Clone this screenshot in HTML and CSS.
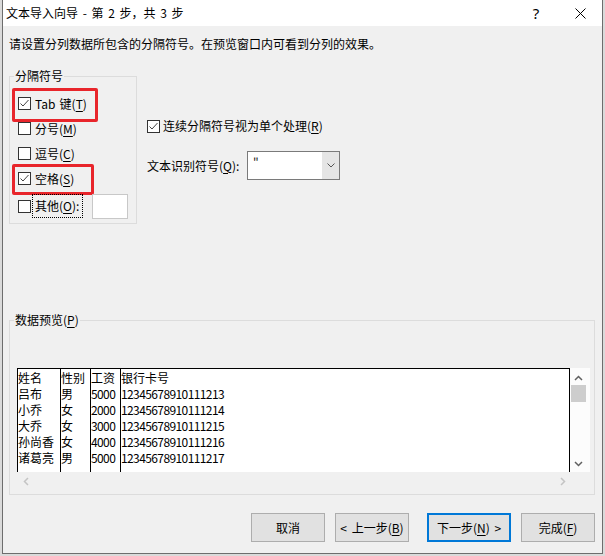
FILE: index.html
```html
<!DOCTYPE html>
<html lang="zh-CN">
<head>
    <meta charset="UTF-8">
    <title>文本导入向导 - 第 2 步，共 3 步</title>
    <link rel="stylesheet" href="styles.css">
</head>
<body>
<div class="dialog">
    <div class="titlebar">
        <span class="title">文本导入向导 - 第 2 步，共 3 步</span>
        <span class="help">?</span>
        <span class="close">
            <svg width="11" height="11" viewBox="0 0 11 11"><path d="M0.5 0.5 L10.5 10.5 M10.5 0.5 L0.5 10.5" stroke="#000" stroke-width="1" fill="none"/></svg>
        </span>
    </div>

    <div class="content">
        <p class="intro">请设置分列数据所包含的分隔符号。在预览窗口内可看到分列的效果。</p>

        <div class="options">
            <fieldset class="group delims">
                <legend>分隔符号</legend>
                <div class="checks">
                    <div class="row mark-tab">
                        <span class="box checked"><svg width="11" height="11" viewBox="0 0 11 11"><polyline points="1.5,5.5 4,8 9.5,2" fill="none" stroke="#444" stroke-width="1"/></svg></span>
                        <label>Tab 键(<u>T</u>)</label>
                    </div>
                    <div class="row">
                        <span class="box"></span>
                        <label>分号(<u>M</u>)</label>
                    </div>
                    <div class="row">
                        <span class="box"></span>
                        <label>逗号(<u>C</u>)</label>
                    </div>
                    <div class="row mark-space">
                        <span class="box checked"><svg width="11" height="11" viewBox="0 0 11 11"><polyline points="1.5,5.5 4,8 9.5,2" fill="none" stroke="#444" stroke-width="1"/></svg></span>
                        <label>空格(<u>S</u>)</label>
                    </div>
                    <div class="row other">
                        <span class="box"></span>
                        <label class="focused">其他(<u>O</u>):</label>
                        <span class="field"></span>
                    </div>
                </div>
            </fieldset>

            <div class="side">
                <div class="row single">
                    <span class="box checked"><svg width="11" height="11" viewBox="0 0 11 11"><polyline points="1.5,5.5 4,8 9.5,2" fill="none" stroke="#444" stroke-width="1"/></svg></span>
                    <label>连续分隔符号视为单个处理(<u>R</u>)</label>
                </div>
                <div class="qualifier">
                    <label>文本识别符号(<u>Q</u>):</label>
                    <div class="combo">
                        <span class="value">"</span>
                        <span class="drop"><svg width="8" height="5" viewBox="0 0 8 5"><polyline points="0.5,0.5 4,4 7.5,0.5" fill="none" stroke="#555" stroke-width="1"/></svg></span>
                    </div>
                </div>
            </div>
        </div>

        <fieldset class="group preview">
            <legend>数据预览(<u>P</u>)</legend>
            <div class="preview-body">
                <div class="sheet">
                    <div class="col c1">
                        <span>姓名</span><span>吕布</span><span>小乔</span><span>大乔</span><span>孙尚香</span><span>诸葛亮</span>
                    </div>
                    <div class="col c2">
                        <span>性别</span><span>男</span><span>女</span><span>女</span><span>女</span><span>男</span>
                    </div>
                    <div class="col c3">
                        <span>工资</span><span class="num">5000</span><span class="num">2000</span><span class="num">3000</span><span class="num">4000</span><span class="num">5000</span>
                    </div>
                    <div class="col c4">
                        <span>银行卡号</span>
                        <span class="num">12345678910111213</span>
                        <span class="num">12345678910111214</span>
                        <span class="num">12345678910111215</span>
                        <span class="num">12345678910111216</span>
                        <span class="num">12345678910111217</span>
                    </div>
                </div>
                <div class="vscroll">
                    <svg class="up" width="9" height="6" viewBox="0 0 9 6"><polyline points="1,5 4.5,1.5 8,5" fill="none" stroke="#606060" stroke-width="1.5"/></svg>
                    <span class="thumb"></span>
                    <svg class="down" width="9" height="6" viewBox="0 0 9 6"><polyline points="1,1 4.5,4.5 8,1" fill="none" stroke="#606060" stroke-width="1.5"/></svg>
                </div>
                <div class="hscroll">
                    <svg width="6" height="9" viewBox="0 0 6 9"><polyline points="5,1 1.5,4.5 5,8" fill="none" stroke="#c4c4c4" stroke-width="1.5"/></svg>
                    <svg width="6" height="9" viewBox="0 0 6 9"><polyline points="1,1 4.5,4.5 1,8" fill="none" stroke="#c4c4c4" stroke-width="1.5"/></svg>
                </div>
            </div>
        </fieldset>

        <div class="buttons">
            <button class="btn">取消</button>
            <button class="btn">&lt; 上一步(<u>B</u>)</button>
            <button class="btn primary">下一步(<u>N</u>) &gt;</button>
            <button class="btn">完成(<u>F</u>)</button>
        </div>
    </div>
</div>
</body>
</html>
```

FILE: styles.css
```css
* {
    margin: 0;
    padding: 0;
    box-sizing: border-box;
}
body {
    background: #dadada;
    font-family: "Noto Sans CJK SC", "Microsoft YaHei", sans-serif;
    font-size: 12px;
    word-spacing: 1.5px;
    color: #000;
    overflow: hidden;
}
u {
    text-decoration: underline;
    text-underline-offset: 2px;
}

/* window frame */
.dialog {
    margin-left: 2px;
    width: 601px;
    height: 554px;
    border: 1px solid #6d6d6d;
    border-top: none;
    background: #f0f0f0;
    display: flex;
    flex-direction: column;
}
.titlebar {
    height: 26px;
    background: #fff;
    display: flex;
    align-items: center;
    padding: 0 12px 0 3px;
}
.titlebar .title {
    flex: 1;
    line-height: 16px;
    word-spacing: 2px;
}
.titlebar .help {
    width: 20px;
    margin-right: 24px;
    text-align: center;
    font-family: "Noto Sans", sans-serif;
    font-size: 15px;
    line-height: 16px;
}
.titlebar .close {
    width: 20px;
    display: flex;
    justify-content: center;
}

.content {
    flex: 1;
    padding: 10px 7px 0 6px;
}
.intro {
    line-height: 16px;
}

/* group boxes */
.group {
    border: 1px solid #dcdcdc;
}
.group legend {
    margin-left: 4px;
    padding: 0 1px;
    line-height: 16px;
}

.options {
    display: flex;
    align-items: flex-start;
    margin-top: 16px;
}
.delims {
    width: 128px;
    padding-bottom: 3px;
}
.checks {
    padding: 7px 0 0 8px;
}
.row {
    position: relative;
    display: flex;
    align-items: center;
    height: 25px;
}
.row label {
    margin-left: 2px;
    padding: 0 2px;
    line-height: 16px;
    white-space: nowrap;
}
.row.other {
    height: 28px;
    margin-top: 1px;
}
.row label.focused {
    outline: 1px dotted #000;
    line-height: 22px;
    padding: 0 3px 0 2px;
}
.field {
    width: 36px;
    height: 25px;
    margin-left: 10px;
    background: #fff;
    border: 1px solid #c8c8c8;
}
.box {
    width: 13px;
    height: 13px;
    flex: none;
    border: 1px solid #333;
    background: #fff;
    display: flex;
    align-items: center;
    justify-content: center;
}

/* red highlight frames */
.mark-tab::after,
.mark-space::after {
    content: "";
    position: absolute;
    left: -6px;
    border: 3px solid #e8252b;
    border-radius: 2px;
}
.mark-tab::after {
    top: -3px;
    width: 80px;
    height: 28px;
}
.mark-space::after {
    top: -2px;
    width: 76px;
    height: 25px;
}

.side {
    margin-left: 10px;
}
.side .single {
    height: 16px;
    margin-top: 50px;
}
.side .single label {
    margin-left: 3px;
    padding: 0;
}
.qualifier {
    display: flex;
    align-items: center;
    margin-top: 17px;
}
.qualifier label {
    width: 100px;
    line-height: 16px;
}
.combo {
    width: 93px;
    height: 29px;
    border: 1px solid #7a7a7a;
    background: #fff;
    display: flex;
}
.combo .value {
    flex: 1;
    padding: 3px 0 0 5px;
    line-height: 16px;
    color: #1a1a1a;
}
.combo .drop {
    width: 17px;
    background: #e5e5e5;
    display: flex;
    align-items: center;
    justify-content: center;
}

/* data preview */
.preview {
    width: 586px;
    margin-top: 88px;
    padding-bottom: 3px;
}
.preview-body {
    display: grid;
    grid-template-columns: 553px 20px;
    grid-template-rows: 104px 19px;
    margin: 40px 0 0 7px;
}
.sheet {
    display: flex;
    background: #fff;
    border: 1px solid #000;
    border-bottom: none;
    overflow: hidden;
}
.col {
    display: flex;
    flex-direction: column;
    padding-top: 1px;
    border-right: 1px solid #000;
}
.col span {
    line-height: 16px;
    white-space: nowrap;
}
.c1 { width: 43px; }
.c2 { width: 30px; }
.c3 { width: 30px; }
.c4 {
    flex: 1;
    border-right: none;
}
.num {
    letter-spacing: -0.6px;
}
.vscroll {
    display: flex;
    flex-direction: column;
    align-items: center;
    padding-right: 3px;
    background: #fcfcfc;
}
.vscroll .up {
    margin-top: 7px;
}
.vscroll .thumb {
    width: 15px;
    height: 17px;
    margin-top: 4px;
    background: #cdcdcd;
}
.vscroll .down {
    margin-top: auto;
    margin-bottom: 5px;
}
.hscroll {
    display: flex;
    align-items: center;
    justify-content: space-between;
    padding: 0 4px 0 6px;
}

/* dialog buttons */
.buttons {
    display: flex;
    justify-content: flex-end;
    margin-top: 18px;
}
.btn {
    width: 74px;
    height: 29px;
    margin-left: 10px;
    border: 1px solid #adadad;
    background: #e1e1e1;
    font: inherit;
    word-spacing: 2px;
    color: #000;
}
.btn.primary {
    width: 84px;
    margin-left: 18px;
    border: 2px solid #0078d7;
}
```
